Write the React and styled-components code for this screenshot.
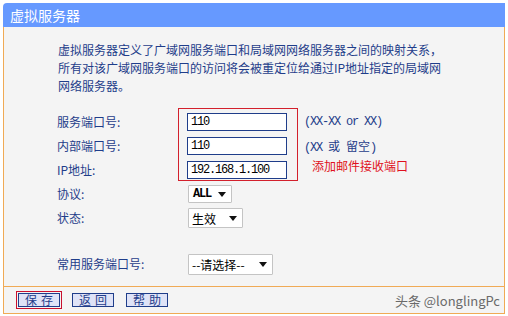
import React from 'react';
import styled, { createGlobalStyle } from 'styled-components';

const GlobalStyle = createGlobalStyle`
    body {
        margin: 0;
        background: #ffffff;
        font-family: "Noto Sans CJK SC", "Liberation Sans", sans-serif;
    }
`;

const NAVY = '#1f3d8a';
const ORANGE = '#f0aa55';
const MONO = '"Liberation Mono", "Noto Sans CJK SC", monospace';

const Panel = styled.div`
    width: 502px;
    margin: 3px 0 0 3px;
`;

const Header = styled.div`
    height: 24px;
    line-height: 24px;
    background: #6699ff;
    border-radius: 4px 0 0 0;
    padding-left: 7px;
    color: #ffffff;
    font-size: 14px;
`;

const Body = styled.div`
    background: #f4f4f4;
    border-left: 1px solid ${ORANGE};
    border-right: 1px solid ${ORANGE};
    border-bottom: 1px solid ${ORANGE};
    padding: 14px 0 10px 53px;
    color: ${NAVY};
    font-size: 12px;
`;

const Intro = styled.div`
    padding-left: 1px;
    line-height: 18px;
    white-space: nowrap;
`;

const Form = styled.div`
    display: grid;
    grid-template-columns: 121px 120px auto;
    grid-auto-rows: 24px;
    margin-top: ${p => p.$top}px;
`;

const Label = styled.div`
    grid-column: 1;
    grid-row: ${p => p.$row || 'auto'};
    align-self: center;
    line-height: 16px;
`;

const RedBox = styled.div`
    grid-column: 2;
    grid-row: 1 / 4;
    border: 1px solid #d3202c;
    margin: -2px 0 1px 0;
`;

const Field = styled.div`
    grid-column: 2;
    grid-row: ${p => p.$row};
    align-self: center;
    justify-self: start;
    margin-left: 9px;
    width: 100px;
    height: 18px;
    box-sizing: border-box;
    border: 1px solid ${NAVY};
    background: #ffffff;
    color: #000000;
    font-family: ${MONO};
    font-size: 12px;
    letter-spacing: -1.2px;
    line-height: 16px;
    padding-left: 3px;
`;

const Hint = styled.div`
    grid-column: 3;
    grid-row: ${p => p.$row};
    align-self: center;
    padding-left: 6px;
    font-family: ${MONO};
    font-size: 12px;
    letter-spacing: -1.2px;
    white-space: nowrap;

    span {
        font-family: "Noto Sans CJK SC", sans-serif;
        font-size: 12px;
        letter-spacing: 0;
    }
`;

const Note = styled.div`
    grid-column: 3;
    grid-row: 3;
    align-self: start;
    padding: 0 0 0 14px;
    color: #e01020;
    font-size: 12px;
    line-height: 16px;
    white-space: nowrap;
`;

const Select = styled.div`
    grid-column: 2;
    grid-row: ${p => p.$row || 'auto'};
    align-self: center;
    justify-self: start;
    margin-left: 10px;
    width: ${p => p.$w}px;
    height: ${p => p.$h || 19}px;
    box-sizing: border-box;
    border: 1px solid #c4c4c4;
    border-radius: 1px;
    background: #ffffff;
    color: #000000;
    display: flex;
    align-items: center;
    justify-content: space-between;
    padding: 0 5px 0 3px;
    font-size: 12px;
`;

const SelText = styled.span`
    font-family: ${p => (p.$mono ? MONO : 'inherit')};
    font-weight: ${p => (p.$mono ? 700 : 400)};
    font-size: 12px;
    letter-spacing: ${p => (p.$mono ? '-1.2px' : '0')};
    padding-left: ${p => (p.$mono ? 1 : 0)}px;
    white-space: nowrap;
`;

const Arrow = () => (
    <svg width="8" height="5" viewBox="0 0 8 5">
        <path d="M0 0 H8 L4 5 Z" fill="#111" />
    </svg>
);

const Footer = styled.div`
    height: 26px;
    display: flex;
    align-items: center;
    gap: 12px;
    padding-left: 13px;
    background: #f4f4f4;
    border-left: 1px solid ${ORANGE};
    border-right: 1px solid ${ORANGE};
    border-bottom: 1px solid ${ORANGE};
`;

const Button = styled.button`
    width: 42px;
    height: 14px;
    padding: 0;
    box-sizing: border-box;
    border: 1px solid ${NAVY};
    background: #dfe3f7;
    color: ${NAVY};
    font-family: "Noto Sans CJK SC", sans-serif;
    font-size: 12px;
    line-height: 12px;
    letter-spacing: 4px;
    text-indent: 4px;
    white-space: nowrap;
    outline: ${p => (p.$marked ? '1px solid #c8102e' : 'none')};
    outline-offset: 1px;
    margin-left: ${p => (p.$marked ? 1 : 0)}px;
`;

const Watermark = styled.div`
    margin-left: auto;
    padding-right: 4px;
    color: #6a6a6a;
    font-size: 13px;
`;

export default function App() {
    return (
        <>
            <GlobalStyle />
            <Panel>
                <Header>虚拟服务器</Header>
                <Body>
                    <Intro>
                        虚拟服务器定义了广域网服务端口和局域网网络服务器之间的映射关系，<br />
                        所有对该广域网服务端口的访问将会被重定位给通过IP地址指定的局域网<br />
                        网络服务器。
                    </Intro>
                    <Form $top={15}>
                        <RedBox />
                        <Label $row={1}>服务端口号:</Label>
                        <Field $row={1}>110</Field>
                        <Hint $row={1}>(XX-XX or XX)</Hint>
                        <Label $row={2}>内部端口号:</Label>
                        <Field $row={2}>110</Field>
                        <Hint $row={2}>(XX <span>或</span> <span>留空</span>)</Hint>
                        <Label $row={3}>IP地址:</Label>
                        <Field $row={3}>192.168.1.100</Field>
                        <Note>添加邮件接收端口</Note>
                        <Label $row={4}>协议:</Label>
                        <Select $row={4} $w={44} $h={18}>
                            <SelText $mono>ALL</SelText>
                            <Arrow />
                        </Select>
                        <Label $row={5}>状态:</Label>
                        <Select $row={5} $w={55} $h={20}>
                            <SelText>生效</SelText>
                            <Arrow />
                        </Select>
                    </Form>
                    <Form $top={22}>
                        <Label>常用服务端口号:</Label>
                        <Select $w={85} $h={21}>
                            <SelText>--请选择--</SelText>
                            <Arrow />
                        </Select>
                    </Form>
                </Body>
                <Footer>
                    <Button $marked>保存</Button>
                    <Button>返回</Button>
                    <Button>帮助</Button>
                    <Watermark>头条 @longlingPc</Watermark>
                </Footer>
            </Panel>
        </>
    );
}
